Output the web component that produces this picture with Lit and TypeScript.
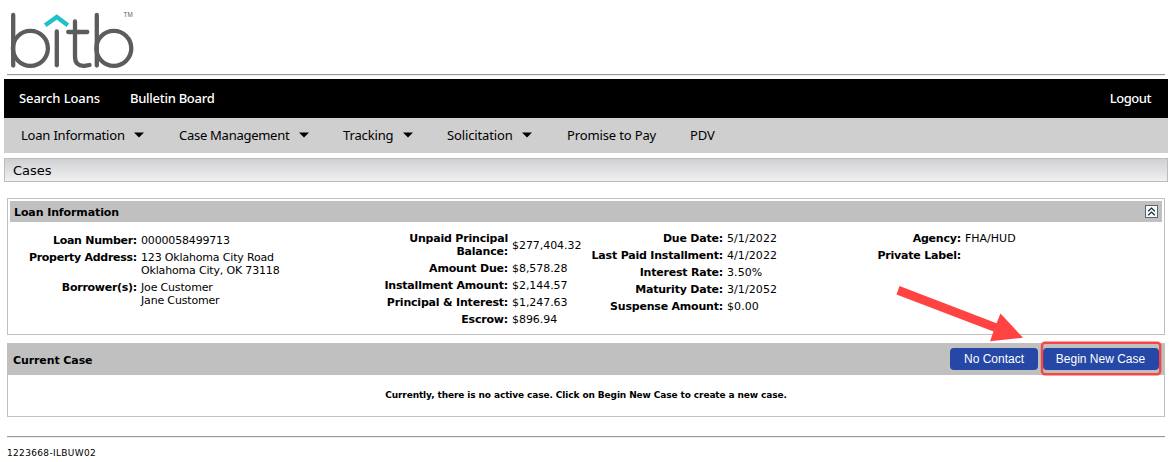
import { LitElement, html, svg, css } from "lit";
import { customElement } from "lit/decorators.js";

type Row = { label: string[]; value: string[] };

const columns: { name: string; rows: Row[] }[] = [
  { name: "c1", rows: [
    { label: ["Loan Number:"], value: ["0000058499713"] },
    { label: ["Property Address:"], value: ["123 Oklahoma City Road", "Oklahoma City, OK 73118"] },
    { label: ["Borrower(s):"], value: ["Joe Customer", "Jane Customer"] },
  ] },
  { name: "c2", rows: [
    { label: ["Unpaid Principal", "Balance:"], value: ["$277,404.32"] },
    { label: ["Amount Due:"], value: ["$8,578.28"] },
    { label: ["Installment Amount:"], value: ["$2,144.57"] },
    { label: ["Principal & Interest:"], value: ["$1,247.63"] },
    { label: ["Escrow:"], value: ["$896.94"] },
  ] },
  { name: "c3", rows: [
    { label: ["Due Date:"], value: ["5/1/2022"] },
    { label: ["Last Paid Installment:"], value: ["4/1/2022"] },
    { label: ["Interest Rate:"], value: ["3.50%"] },
    { label: ["Maturity Date:"], value: ["3/1/2052"] },
    { label: ["Suspense Amount:"], value: ["$0.00"] },
  ] },
  { name: "c4", rows: [
    { label: ["Agency:"], value: ["FHA/HUD"] },
    { label: ["Private Label:"], value: [] },
  ] },
];

const menu = [
  { text: "Loan Information", cls: "m1", drop: true },
  { text: "Case Management", cls: "m2", drop: true },
  { text: "Tracking", cls: "m3", drop: true },
  { text: "Solicitation", cls: "m4", drop: true },
  { text: "Promise to Pay", cls: "m5", drop: false },
  { text: "PDV", cls: "m6", drop: false },
];

const caret = svg`<polygon points="0,0.5 10,0.5 5,5.5" fill="#000"/>`;

@customElement("app-root")
export class AppRoot extends LitElement {
  static styles = css`
    :host { display: block; position: relative; width: 1174px; height: 462px; overflow: hidden; background: #fff; color: #000; font-family: Verdana, "DejaVu Sans", sans-serif; font-size: 11px; }
    * { box-sizing: border-box; }
    svg { display: block; }
    .logo { height: 74px; }
    .rule { height: 2px; margin: 0 9px 0 7px; border-top: 1px solid #9a9a9a; border-bottom: 1px solid #ececec; }
    .bar { display: flex; align-items: center; height: 39px; margin: 3px 6px 0 4px; padding: 0 17px 2px 15px; background: #000; color: #fff; font: 500 13px/18px "Noto Sans", sans-serif; white-space: nowrap; }
    .bar .search { width: 111px; letter-spacing: -0.08px; }
    .bulletin { letter-spacing: -0.28px; }
    .bar .logout { margin-left: auto; letter-spacing: -0.45px; }
    .menu { display: flex; align-items: center; height: 35px; margin: 0 6px 0 4px; padding: 0 0 2px 17px; background: #cfcfcf; font-family: "Noto Sans", sans-serif; font-size: 13px; letter-spacing: -0.14px; white-space: nowrap; }
    .item { display: flex; align-items: center; justify-content: space-between; }
    .m1 { width: 123px; margin-right: 35px; letter-spacing: -0.2px; }
    .m2 { width: 130px; margin-right: 34px; letter-spacing: -0.27px; }
    .m3 { width: 70px; margin-right: 34px; }
    .m4 { width: 85px; margin-right: 35px; }
    .m5 { width: 90px; margin-right: 33px; }
    .title { display: flex; align-items: center; height: 24px; margin: 5px 6px 0 4px; padding-left: 8px; border: 1px solid #bcbcbc; background: linear-gradient(#cfd0d2, #f0f0f2); font-size: 13px; }
    .panel { height: 137px; margin: 16px 9px 0 7px; padding: 2px; border: 1px solid #c0c0c0; }
    .head { display: flex; align-items: center; justify-content: space-between; height: 21px; padding: 0 4px; background: #c0c0c0; font-weight: bold; }
    .loan, .current { padding-top: 2px; letter-spacing: -0.1px; }
    .cols { display: flex; }
    .col { display: grid; align-content: start; column-gap: 4px; row-gap: 4px; line-height: 13px; padding-top: 10px; white-space: nowrap; align-items: center; }
    .label { text-align: right; font-weight: bold; letter-spacing: -0.2px; }
    .c1 { grid-template-columns: 127px 1fr; width: 348px; padding-top: 12px; align-items: start; }
    .c1 .label { letter-spacing: -0.27px; }
    .c1 .value { letter-spacing: -0.17px; }
    .c2 { grid-template-columns: 150px 1fr; width: 218px; }
    .c2 .value { letter-spacing: -0.06px; }
    .c3 { grid-template-columns: 147px 1fr; width: 272px; }
    .c3 .value { letter-spacing: 0.08px; }
    .c4 { grid-template-columns: 113px 1fr; }
    .case { height: 74px; margin: 8px 9px 0 7px; border: 1px solid #c0c0c0; border-top: 0; }
    .casehead { display: flex; align-items: center; height: 32px; padding: 0 5px 0 5px; background: #c0c0c0; font-weight: bold; }
    .buttons { display: flex; gap: 5px; margin-left: auto; }
    .btn { height: 22px; padding: 0; border: 0; border-radius: 4px; background: #2547a5; color: #fff; font: 12px/22px "Liberation Sans", Arial, sans-serif; text-align: center; white-space: nowrap; }
    .no { width: 88px; }
    .begin { width: 116px; padding-right: 1px; }
    .empty { text-align: center; font-size: 9px; font-weight: bold; letter-spacing: -0.11px; line-height: 41px; white-space: nowrap; }
    .end { margin-top: 19px; }
    .foot { padding: 9px 0 0 7px; font-size: 9px; line-height: 12px; letter-spacing: 0.33px; }
    .mark { position: absolute; left: 890px; top: 280px; pointer-events: none; }
  `;

  render() {
    return html`
      <div class="logo">
        <svg width="150" height="74" viewBox="0 0 150 74" fill="none" stroke="#5b5c5e" stroke-width="4.3" stroke-linecap="round">
          <line x1="13.2" y1="15" x2="13.2" y2="65.5"/><circle cx="30.4" cy="48.3" r="17.5"/>
          <line x1="56.8" y1="31.5" x2="56.8" y2="65.3"/>
          <path d="M75 21.5V56.5Q75 66.5 84.5 65.8L89.5 65"/><line x1="68.2" y1="32" x2="87.3" y2="32"/>
          <line x1="96.8" y1="15" x2="96.8" y2="65.5"/><circle cx="113.8" cy="48.3" r="17.5"/>
          <path d="M45.2 25.3L56.8 17L67.8 25.3" stroke="#1fc0c8" stroke-linecap="butt" stroke-width="4.4"/>
          <text x="123.6" y="17.3" fill="#5b5c5e" stroke="none" font-family="Liberation Sans, sans-serif" font-size="6.3">TM</text>
        </svg>
      </div>
      <div class="rule"></div>
      <div class="bar"><span class="search">Search Loans</span><span class="bulletin">Bulletin Board</span><span class="logout">Logout</span></div>
      <div class="menu">
        ${menu.map(m => html`<div class="item ${m.cls}"><span>${m.text}</span>${m.drop ? html`<svg width="10" height="6">${caret}</svg>` : ""}</div>`)}
      </div>
      <div class="title"><span>Cases</span></div>
      <div class="panel">
        <div class="head"><span class="loan">Loan Information</span>
          <svg width="13" height="13" fill="none"><rect x=".5" y=".5" width="12" height="12" fill="#f0f8fa" stroke="#596574"/><path d="M3.2 6.2L6.5 3L9.8 6.2M3.2 10.2L6.5 7L9.8 10.2" stroke="#202830" stroke-width="1.2"/></svg>
        </div>
        <div class="cols">
          ${columns.map(c => html`<div class="col ${c.name}">${c.rows.map(r => html`
            <div class="label">${r.label.map(t => html`<div>${t}</div>`)}</div>
            <div class="value">${r.value.map(t => html`<div>${t}</div>`)}</div>`)}</div>`)}
        </div>
      </div>
      <div class="case">
        <div class="casehead"><span class="current">Current Case</span>
          <div class="buttons"><button class="btn no">No Contact</button><button class="btn begin">Begin New Case</button></div>
        </div>
        <div class="empty"><span>Currently, there is no active case. Click on Begin New Case to create a new case.</span></div>
      </div>
      <div class="rule end"></div>
      <div class="foot"><span>1223668-ILBUW02</span></div>
      <svg class="mark" width="280" height="100" viewBox="890 280 280 100">
        <polygon points="899.5,286 996.5,323.3 1000.5,313.5 1023,337.7 990,341.2 993.5,331.5 896.5,294.5" fill="#ff4343"/>
        <rect x="1042" y="342.8" width="118.2" height="31.4" rx="3" fill="none" stroke="#f74545" stroke-width="2.4"/>
      </svg>`;
  }
}
